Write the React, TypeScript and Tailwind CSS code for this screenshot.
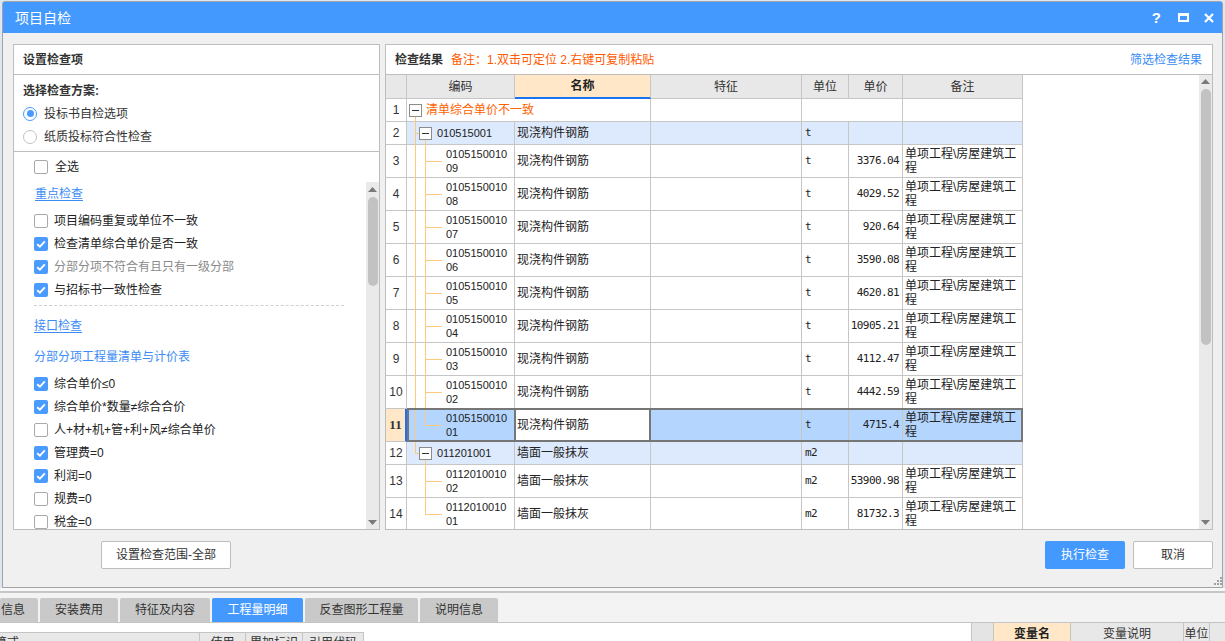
import React from "react";

const F = "font-['Liberation_Sans','Noto_Sans_CJK_SC',sans-serif]";
const MONO = "font-['DejaVu_Sans_Mono','Liberation_Mono',monospace] text-[11px] tracking-[-0.6px]";

function Check({ checked }: { checked: boolean }) {
  return checked ? (
    <span className="w-[14px] h-[14px] rounded-[2px] bg-[#4a9bff] flex items-center justify-center shrink-0">
      <svg width="10" height="8" viewBox="0 0 10 8">
        <path d="M1.2 4.2 L3.9 6.6 L8.8 1.4" stroke="white" strokeWidth="1.9" fill="none" />
      </svg>
    </span>
  ) : (
    <span className="w-[14px] h-[14px] rounded-[2px] border border-[#a9a9a9] bg-white shrink-0" />
  );
}

function Radio({ checked, label }: { checked: boolean; label: string }) {
  return (
    <div className="h-[23px] flex items-center gap-[7px] pl-[9px]">
      {checked ? (
        <span className="w-[14px] h-[14px] rounded-full border border-[#4a9bff] bg-white flex items-center justify-center">
          <span className="w-[7px] h-[7px] rounded-full bg-[#4a9bff]" />
        </span>
      ) : (
        <span className="w-[14px] h-[14px] rounded-full border border-[#c3c3c3] bg-white" />
      )}
      <span className="text-[12px] leading-[14px]">{label}</span>
    </div>
  );
}

function Item({ t, c, gray }: { t: string; c: boolean; gray?: boolean }) {
  return (
    <div className="h-[23px] flex items-center gap-[6px] pl-[20px]">
      <Check checked={c} />
      <span className={`text-[12px] leading-[14px] whitespace-nowrap ${gray ? "text-[#8a8a8a]" : "text-[#222]"}`}>{t}</span>
    </div>
  );
}

const items1 = [
  { t: "项目编码重复或单位不一致", c: false },
  { t: "检查清单综合单价是否一致", c: true },
  { t: "分部分项不符合有且只有一级分部", c: true, gray: true },
  { t: "与招标书一致性检查", c: true },
];
const items2 = [
  { t: "综合单价≤0", c: true },
  { t: "综合单价*数量≠综合合价", c: true },
  { t: "人+材+机+管+利+风≠综合单价", c: false },
  { t: "管理费=0", c: true },
  { t: "利润=0", c: true },
  { t: "规费=0", c: false },
  { t: "税金=0", c: false },
];

function UpArrow() {
  return (
    <svg width="9" height="5" viewBox="0 0 9 5">
      <path d="M0 5 L4.5 0 L9 5 Z" fill="#7a7a7a" />
    </svg>
  );
}
function DownArrow() {
  return (
    <svg width="9" height="5" viewBox="0 0 9 5">
      <path d="M0 0 L4.5 5 L9 0 Z" fill="#7a7a7a" />
    </svg>
  );
}

type Row = {
  n: number;
  kind: "group" | "sub" | "child";
  code?: string;
  name?: string;
  unit?: string;
  price?: string;
  last?: boolean;
  parentLast?: boolean;
  sel?: boolean;
};

const rows: Row[] = [
  { n: 1, kind: "group" },
  { n: 2, kind: "sub", code: "010515001", name: "现浇构件钢筋", unit: "t" },
  { n: 3, kind: "child", code: "010515001009", name: "现浇构件钢筋", unit: "t", price: "3376.04" },
  { n: 4, kind: "child", code: "010515001008", name: "现浇构件钢筋", unit: "t", price: "4029.52" },
  { n: 5, kind: "child", code: "010515001007", name: "现浇构件钢筋", unit: "t", price: "920.64" },
  { n: 6, kind: "child", code: "010515001006", name: "现浇构件钢筋", unit: "t", price: "3590.08" },
  { n: 7, kind: "child", code: "010515001005", name: "现浇构件钢筋", unit: "t", price: "4620.81" },
  { n: 8, kind: "child", code: "010515001004", name: "现浇构件钢筋", unit: "t", price: "10905.21" },
  { n: 9, kind: "child", code: "010515001003", name: "现浇构件钢筋", unit: "t", price: "4112.47" },
  { n: 10, kind: "child", code: "010515001002", name: "现浇构件钢筋", unit: "t", price: "4442.59" },
  { n: 11, kind: "child", code: "010515001001", name: "现浇构件钢筋", unit: "t", price: "4715.4", last: true, sel: true },
  { n: 12, kind: "sub", code: "011201001", name: "墙面一般抹灰", unit: "m2", last: true },
  { n: 13, kind: "child", code: "011201001002", name: "墙面一般抹灰", unit: "m2", price: "53900.98", parentLast: true },
  { n: 14, kind: "child", code: "011201001001", name: "墙面一般抹灰", unit: "m2", price: "81732.3", parentLast: true, last: true },
];

const LINE = "absolute bg-[#fcc97f]";

function MinusBox({ left }: { left: string }) {
  return (
    <span className={`absolute top-[5px] ${left} w-[13px] h-[13px] border border-[#8c8c8c] bg-white flex items-center justify-center`}>
      <span className="w-[7px] h-px bg-[#333]" />
    </span>
  );
}

function Tree({ r }: { r: Row }) {
  if (r.kind === "group") {
    return (
      <>
        <span className={`${LINE} left-[8px] w-px top-[18px] -bottom-[1px]`} />
        <MinusBox left="left-[2px]" />
      </>
    );
  }
  if (r.kind === "sub") {
    return (
      <>
        <span className={`${LINE} left-[8px] w-px top-0 ${r.last ? "h-[12px]" : "-bottom-[1px]"}`} />
        <span className={`${LINE} left-[8px] w-[5px] h-px top-[11px]`} />
        <span className={`${LINE} left-[18px] w-px top-[18px] -bottom-[1px]`} />
        <MinusBox left="left-[12px]" />
      </>
    );
  }
  return (
    <>
      {!r.parentLast && <span className={`${LINE} left-[8px] w-px top-0 -bottom-[1px]`} />}
      <span className={`${LINE} left-[18px] w-px top-0 ${r.last ? "h-[17px]" : "-bottom-[1px]"}`} />
      <span className={`${LINE} left-[18px] w-[17px] h-px top-[16px]`} />
    </>
  );
}

function TRow({ r }: { r: Row }) {
  const h = r.kind === "child" ? "h-[33px]" : "h-[23px]";
  const bg = r.sel ? "bg-[#b4d5fe]" : r.kind === "sub" ? "bg-[#dde9fc]" : "bg-white";
  const bd = "border-r border-b border-[#c6c6c6] shrink-0";
  const num = r.sel
    ? "bg-[#ffe7c7] border-r-2 border-r-[#1e6ff5] font-['Liberation_Serif',serif] font-bold text-[13px]"
    : "bg-white border-r text-[12px]";
  const remark = r.kind === "child" ? (
    <span className="text-[12px] leading-[14px] pl-[2px] text-[#222]">
      单项工程\房屋建筑工
      <br />程
    </span>
  ) : null;
  return (
    <div className={`flex ${h} relative`}>
      <div className={`w-[21px] shrink-0 border-b border-[#c6c6c6] flex items-center justify-center text-[#333] ${num}`}>{r.n}</div>
      {r.kind === "group" ? (
        <>
          <div className={`w-[244px] ${bd} ${bg} relative flex items-center`}>
            <Tree r={r} />
            <span className="pl-[19px] text-[12px] leading-[14px] text-[#ff6200]">清单综合单价不一致</span>
          </div>
          <div className={`w-[151px] ${bd} ${bg}`} />
          <div className={`w-[101px] ${bd} ${bg}`} />
          <div className={`w-[120px] ${bd} ${bg}`} />
        </>
      ) : (
        <>
          <div className={`w-[108px] ${bd} ${bg} relative flex items-center`}>
            <Tree r={r} />
            {r.kind === "sub" ? (
              <span className="pl-[30px] text-[11px] leading-[14px] text-[#222]">{r.code}</span>
            ) : (
              <span className="pl-[39px] text-[11px] leading-[14px] text-[#222]">
                {r.code!.slice(0, 10)}
                <br />
                {r.code!.slice(10)}
              </span>
            )}
          </div>
          <div className={`w-[136px] ${bd} ${r.sel ? "bg-white" : bg} flex items-center pl-[2px] text-[12px] text-[#222]`}>{r.name}</div>
          <div className={`w-[151px] ${bd} ${bg}`} />
          <div className={`w-[47px] ${bd} ${bg} flex items-center pl-[3px] text-[#222] ${MONO}`}>{r.unit}</div>
          <div className={`w-[54px] ${bd} ${bg} flex items-center justify-end pr-[3px] text-[#222] ${MONO}`}>{r.price}</div>
          <div className={`w-[120px] ${bd} ${bg} flex items-center`}>{remark}</div>
        </>
      )}
      {r.sel && (
        <>
          <div className="absolute left-[21px] w-[616px] top-[-1px] bottom-0 border-2 border-[#767676] pointer-events-none" />
          <div className="absolute left-[128px] w-[137px] top-[-1px] bottom-0 border-2 border-[#767676] pointer-events-none" />
        </>
      )}
    </div>
  );
}

function HCell({ w, children, active }: { w: string; children?: React.ReactNode; active?: boolean }) {
  return (
    <div
      className={`${w} shrink-0 border-r border-[#c6c6c6] flex items-center justify-center text-[12px] ${
        active ? "bg-[#ffe7c7] font-bold border-b-2 border-b-[#1a74f2] text-[#222]" : "bg-[#e8e8e8] border-b text-[#333]"
      }`}
    >
      {children}
    </div>
  );
}

function Tab({ w, label, active, first }: { w: string; label: string; active?: boolean; first?: boolean }) {
  return (
    <div
      className={`${w} ${first ? "" : "ml-[2px]"} h-[24px] rounded-t-[2px] flex items-center ${first ? "justify-start pl-[1px]" : "justify-center"} text-[12px] ${
        active ? "bg-[#4499ff] text-white" : "bg-[#c9c9c9] text-[#333]"
      }`}
    >
      {label}
    </div>
  );
}

export default function App() {
  return (
    <div className={`w-[1225px] h-[641px] overflow-hidden flex flex-col bg-[#f3f3f3] text-[#333] ${F}`}>
      <div className="h-[588px] shrink-0 pt-[1px] px-[2px] bg-[#dde6f3]">
        <div className="h-[587px] flex flex-col border border-[#a3a3a3] rounded-t-[3px] bg-[#f0f0f0] relative">
          {/* title bar */}
          <div className="h-[31px] shrink-0 bg-[#4499ff] flex items-center justify-between pl-[12px] pr-[8px] text-white">
            <span className="text-[14px] leading-[16px]">项目自检</span>
            <div className="flex items-center">
              <span className="font-['Liberation_Sans',sans-serif] font-bold text-[15px] leading-[16px]">?</span>
              <span className="ml-[17px] w-[11px] h-[9px] border-2 border-t-[3px] border-white" />
              <svg className="ml-[15px]" width="10" height="10" viewBox="0 0 10 10">
                <path d="M1 1 L9 9 M9 1 L1 9" stroke="white" strokeWidth="2.2" />
              </svg>
            </div>
          </div>

          {/* body */}
          <div className="flex-1 flex flex-col pt-[11px] pl-[10px] pr-[9px]">
            <div className="h-[486px] flex gap-[5px]">
              {/* left panel */}
              <div className="w-[367px] shrink-0 border border-[#bdbdbd] bg-white flex flex-col">
                <div className="h-[30px] shrink-0 border-b border-[#bdbdbd] flex items-center pl-[9px] text-[12px] font-bold text-[#333]">设置检查项</div>
                <div className="h-[77px] shrink-0 border-b border-[#bdbdbd] pt-[6px]">
                  <div className="h-[20px] flex items-center pl-[9px] text-[12px] font-bold text-[#333]">选择检查方案:</div>
                  <div className="mt-[1px]">
                    <Radio checked label="投标书自检选项" />
                    <Radio checked={false} label="纸质投标符合性检查" />
                  </div>
                </div>
                <div className="h-[30px] shrink-0 flex items-center gap-[7px] pl-[20px]">
                  <Check checked={false} />
                  <span className="text-[12px] text-[#222]">全选</span>
                </div>
                <div className="flex-1 min-h-0 flex">
                  <div className="flex-1 overflow-hidden">
                    <div className="h-[23px] flex items-center pl-[21px] text-[12px] text-[#3b8cf5] underline underline-offset-[2px]">重点检查</div>
                    <div className="mt-[4px]">
                      {items1.map((it) => (
                        <Item key={it.t} {...it} />
                      ))}
                    </div>
                    <div className="mt-[4px] ml-[20px] w-[310px] border-t border-dashed border-[#d0d0d0]" />
                    <div className="mt-[8px] h-[23px] flex items-center pl-[20px] text-[12px] text-[#3b8cf5] underline underline-offset-[2px]">接口检查</div>
                    <div className="mt-[8px] h-[23px] flex items-center pl-[20px] text-[12px] text-[#3b8cf5]">分部分项工程量清单与计价表</div>
                    <div className="mt-[4px]">
                      {items2.map((it) => (
                        <Item key={it.t} {...it} />
                      ))}
                    </div>
                  </div>
                  <div className="w-[13px] shrink-0 bg-[#eaeaea] flex flex-col items-center">
                    <div className="h-[14px] flex items-center justify-center">
                      <UpArrow />
                    </div>
                    <div className="mt-[1px] w-[10px] h-[89px] rounded-full bg-[#c2c2c2]" />
                    <div className="flex-1" />
                    <div className="h-[14px] flex items-center justify-center">
                      <DownArrow />
                    </div>
                  </div>
                </div>
              </div>

              {/* right panel */}
              <div className="flex-1 border border-[#bdbdbd] bg-white flex flex-col min-w-0">
                <div className="h-[30px] shrink-0 border-b border-[#bdbdbd] flex items-center pl-[9px] pr-[10px] text-[12px]">
                  <span className="font-bold text-[#333]">检查结果</span>
                  <span className="ml-[8px] text-[#ff5a00]">备注：1.双击可定位 2.右键可复制粘贴</span>
                  <span className="ml-auto text-[#3b8cf5]">筛选检查结果</span>
                </div>
                <div className="flex-1 min-h-0 flex">
                  <div className="w-[637px] shrink-0 overflow-hidden">
                    <div className="flex h-[24px]">
                      <HCell w="w-[21px]" />
                      <HCell w="w-[108px]">编码</HCell>
                      <HCell w="w-[136px]" active>
                        名称
                      </HCell>
                      <HCell w="w-[151px]">特征</HCell>
                      <HCell w="w-[47px]">单位</HCell>
                      <HCell w="w-[54px]">单价</HCell>
                      <HCell w="w-[120px]">备注</HCell>
                    </div>
                    {rows.map((r) => (
                      <TRow key={r.n} r={r} />
                    ))}
                  </div>
                  <div className="flex-1" />
                  <div className="w-[13px] shrink-0 bg-[#eaeaea] flex flex-col items-center">
                    <div className="h-[13px] flex items-center justify-center">
                      <UpArrow />
                    </div>
                    <div className="mt-[1px] w-[10px] h-[256px] rounded-full bg-[#c2c2c2]" />
                    <div className="flex-1" />
                    <div className="h-[14px] flex items-center justify-center">
                      <DownArrow />
                    </div>
                  </div>
                </div>
              </div>
            </div>

            {/* buttons */}
            <div className="mt-[11px] h-[28px] flex items-center">
              <button className="ml-[88px] w-[130px] h-[28px] bg-white border border-[#bdbdbd] rounded-[2px] text-[12px] text-[#333]">
                设置检查范围-全部
              </button>
              <button className="ml-auto w-[80px] h-[28px] bg-[#4499ff] rounded-[2px] text-[12px] text-white">执行检查</button>
              <button className="ml-[8px] w-[80px] h-[28px] bg-white border border-[#bdbdbd] rounded-[2px] text-[12px] text-[#333]">取消</button>
            </div>
          </div>

          <svg className="absolute right-0 bottom-[2px]" width="9" height="9" viewBox="0 0 9 9">
            <rect x="7" y="1" width="2" height="2" fill="#a0a0a0" />
            <rect x="4" y="4" width="2" height="2" fill="#a0a0a0" />
            <rect x="7" y="4" width="2" height="2" fill="#a0a0a0" />
            <rect x="1" y="7" width="2" height="2" fill="#a0a0a0" />
            <rect x="4" y="7" width="2" height="2" fill="#a0a0a0" />
            <rect x="7" y="7" width="2" height="2" fill="#a0a0a0" />
          </svg>
        </div>
      </div>

      {/* app area below dialog */}
      <div className="h-[3px] shrink-0 bg-[#f7f7f7]" />
      <div className="h-[2px] shrink-0 bg-[#c6c6c6]" />
      <div className="h-[5px] shrink-0 bg-[#f3f3f3]" />
      <div className="h-[25px] shrink-0 flex items-start bg-[#f3f3f3] border-b border-[#c4c4c4]">
        <Tab w="w-[38px]" label="信息" first />
        <Tab w="w-[78px]" label="安装费用" />
        <Tab w="w-[90px]" label="特征及内容" />
        <Tab w="w-[91px]" label="工程量明细" active />
        <Tab w="w-[113px]" label="反查图形工程量" />
        <Tab w="w-[78px]" label="说明信息" />
      </div>
      <div className="flex-1 flex min-h-0">
        <div className="w-[971px] shrink-0 bg-white pt-[9px]">
          <div className="flex h-[20px] border-t border-[#c4c4c4] bg-[#e8e8e8] w-[364px] text-[12px] text-[#333]">
            <div className="w-[200px] border-r border-[#c4c4c4] flex items-center overflow-hidden">
              <span className="-ml-[5px]">算式</span>
            </div>
            <div className="w-[46px] border-r border-[#c4c4c4] flex items-center justify-center">使用</div>
            <div className="w-[57px] border-r border-[#c4c4c4] flex items-center justify-center">累加标识</div>
            <div className="w-[61px] border-r border-[#c4c4c4] flex items-center justify-center">引用代码</div>
          </div>
        </div>
        <div className="flex-1 flex bg-[#e6e6e6] border-l border-[#c4c4c4] text-[12px]">
          <div className="w-[22px] h-[22px] border-r border-[#c4c4c4] bg-[#e4e4e4]" />
          <div className="w-[77px] h-[22px] border-r border-[#c4c4c4] bg-[#ffe7c7] font-bold flex items-center justify-center text-[#222]">变量名</div>
          <div className="w-[113px] h-[22px] border-r border-[#c4c4c4] bg-[#e8e8e8] flex items-center justify-center">变量说明</div>
          <div className="w-[26px] h-[22px] border-r border-[#c4c4c4] bg-[#e8e8e8] flex items-center justify-center">单位</div>
          <div className="flex-1 h-[22px] bg-[#e8e8e8]" />
        </div>
      </div>
    </div>
  );
}
